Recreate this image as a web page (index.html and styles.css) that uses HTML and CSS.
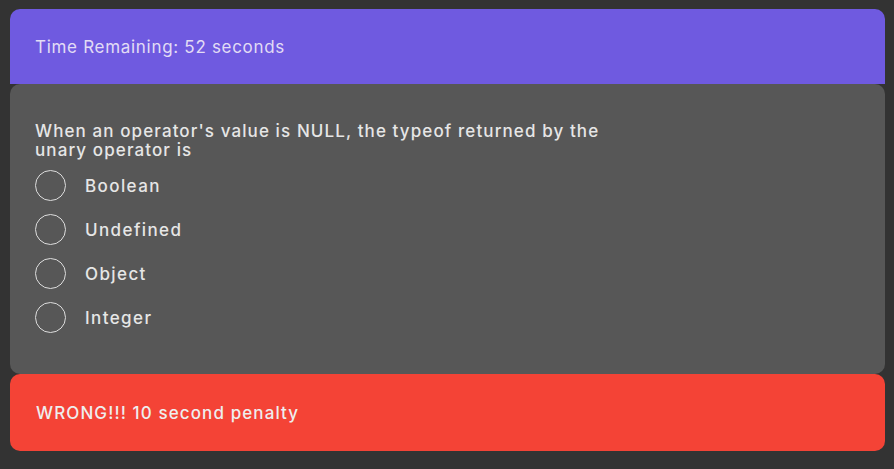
FILE: index.html
```html
<!DOCTYPE html>
<html>
<head>
<meta charset="utf-8">
<link rel="stylesheet" href="styles.css">
</head>
<body>
<div class="page">
  <header class="timer">Time Remaining: 52 seconds</header>
  <section class="card">
    <p class="question">When an operator's value is NULL, the typeof returned by the unary operator is</p>
    <ul class="options">
      <li class="option"><span class="radio"></span><span class="label">Boolean</span></li>
      <li class="option"><span class="radio"></span><span class="label">Undefined</span></li>
      <li class="option"><span class="radio"></span><span class="label">Object</span></li>
      <li class="option"><span class="radio"></span><span class="label">Integer</span></li>
    </ul>
  </section>
  <div class="result">WRONG!!! 10 second penalty</div>
</div>
</body>
</html>
```
FILE: styles.css
```css
html, body {
  margin: 0;
  padding: 0;
  background: #333333;
  font-family: Inter, sans-serif;
}
.page {
  padding: 9px 9px 0 10px;
  display: flex;
  flex-direction: column;
}
.timer {
  background: #6f5ae0;
  color: #e2dcf5;
  border-radius: 10px 10px 0 0;
  height: 75px;
  box-sizing: border-box;
  padding: 0 25px;
  display: flex;
  align-items: center;
  font-size: 17px;
  font-weight: 400;
  letter-spacing: 0.7px;
}
.card {
  background: #575757;
  border-radius: 10px;
  height: 290px;
  box-sizing: border-box;
  padding: 38px 25px 0;
}
.question {
  margin: 0 0 10px;
  max-width: 605px;
  color: #e6e6e6;
  font-size: 17px;
  font-weight: 500;
  line-height: 19px;
  letter-spacing: 1.1px;
}
.options {
  list-style: none;
  margin: 0;
  padding: 0;
  display: flex;
  flex-direction: column;
  gap: 13px;
}
.option {
  display: flex;
  align-items: center;
  height: 31px;
}
.radio {
  width: 31px;
  height: 31px;
  box-sizing: border-box;
  border: 1.5px solid #dddddd;
  border-radius: 50%;
  margin-right: 19px;
}
.label {
  color: #e6e6e6;
  font-size: 17px;
  font-weight: 500;
  letter-spacing: 1.4px;
}
.result {
  background: #f44336;
  color: #eeeeee;
  border-radius: 10px;
  height: 77px;
  box-sizing: border-box;
  padding: 0 26px;
  display: flex;
  align-items: center;
  font-size: 17px;
  font-weight: 500;
  letter-spacing: 1.1px;
}
```
